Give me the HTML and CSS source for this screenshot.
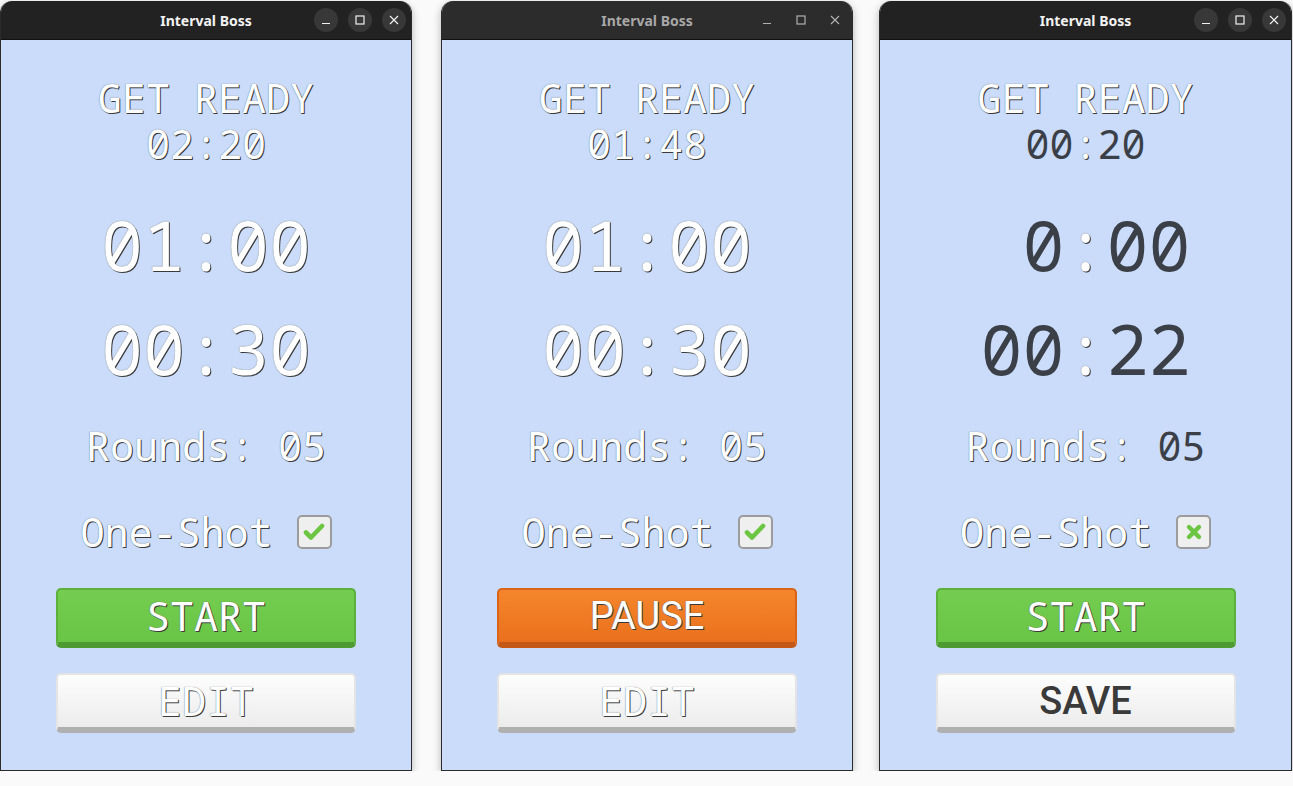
FILE: index.html
```html
<!DOCTYPE html>
<html lang="en">
<head>
  <meta charset="UTF-8">
  <title>Interval Boss</title>
  <link rel="stylesheet" href="styles.css">
</head>
<body>
  <div class="desk">

    <!-- window 1: idle -->
    <div class="win">
      <div class="titlebar">
        <span class="title">Interval Boss</span>
        <div class="wm-buttons">
          <span class="wm-btn"><svg width="10" height="10" viewBox="0 0 10 10"><path d="M1 8.5h8" stroke="currentColor" stroke-width="1.2"/></svg></span>
          <span class="wm-btn"><svg width="10" height="10" viewBox="0 0 10 10"><rect x="1" y="1" width="8" height="8" fill="none" stroke="currentColor" stroke-width="1.2"/></svg></span>
          <span class="wm-btn"><svg width="10" height="10" viewBox="0 0 10 10"><path d="M1 1l8 8M9 1l-8 8" stroke="currentColor" stroke-width="1.2"/></svg></span>
        </div>
      </div>
      <div class="app">
        <div class="status">
          <div class="line">GET READY</div>
          <div class="line">02:20</div>
        </div>
        <div class="big">01:00</div>
        <div class="big second">00:30</div>
        <div class="rounds">Rounds: 05</div>
        <div class="oneshot">
          <span>One-Shot</span>
          <span class="checkbox"><svg width="22" height="20" viewBox="0 0 22 20"><path d="M3 10.5l5 5L19 4" fill="none" stroke="#6cc644" stroke-width="4.6" stroke-linecap="round" stroke-linejoin="round"/></svg></span>
        </div>
        <button class="btn btn-go">START</button>
        <button class="btn btn-plain">EDIT</button>
      </div>
    </div>

    <!-- window 2: running, unfocused -->
    <div class="win win-2 inactive">
      <div class="titlebar">
        <span class="title">Interval Boss</span>
        <div class="wm-buttons">
          <span class="wm-btn"><svg width="10" height="10" viewBox="0 0 10 10"><path d="M1 8.5h8" stroke="currentColor" stroke-width="1.2"/></svg></span>
          <span class="wm-btn"><svg width="10" height="10" viewBox="0 0 10 10"><rect x="1" y="1" width="8" height="8" fill="none" stroke="currentColor" stroke-width="1.2"/></svg></span>
          <span class="wm-btn"><svg width="10" height="10" viewBox="0 0 10 10"><path d="M1 1l8 8M9 1l-8 8" stroke="currentColor" stroke-width="1.2"/></svg></span>
        </div>
      </div>
      <div class="app">
        <div class="status">
          <div class="line">GET READY</div>
          <div class="line">01:48</div>
        </div>
        <div class="big">01:00</div>
        <div class="big second">00:30</div>
        <div class="rounds">Rounds: 05</div>
        <div class="oneshot">
          <span>One-Shot</span>
          <span class="checkbox"><svg width="22" height="20" viewBox="0 0 22 20"><path d="M3 10.5l5 5L19 4" fill="none" stroke="#6cc644" stroke-width="4.6" stroke-linecap="round" stroke-linejoin="round"/></svg></span>
        </div>
        <button class="btn btn-pause">PAUSE</button>
        <button class="btn btn-plain">EDIT</button>
      </div>
    </div>

    <!-- window 3: editing -->
    <div class="win win-3">
      <div class="titlebar">
        <span class="title">Interval Boss</span>
        <div class="wm-buttons">
          <span class="wm-btn"><svg width="10" height="10" viewBox="0 0 10 10"><path d="M1 8.5h8" stroke="currentColor" stroke-width="1.2"/></svg></span>
          <span class="wm-btn"><svg width="10" height="10" viewBox="0 0 10 10"><rect x="1" y="1" width="8" height="8" fill="none" stroke="currentColor" stroke-width="1.2"/></svg></span>
          <span class="wm-btn"><svg width="10" height="10" viewBox="0 0 10 10"><path d="M1 1l8 8M9 1l-8 8" stroke="currentColor" stroke-width="1.2"/></svg></span>
        </div>
      </div>
      <div class="app">
        <div class="status">
          <div class="line">GET READY</div>
          <div class="line"><span class="edit">00</span>:<span class="edit">20</span></div>
        </div>
        <div class="big"><span class="edit"> 0</span>:<span class="edit">00</span></div>
        <div class="big second"><span class="edit">00</span>:<span class="edit">22</span></div>
        <div class="rounds">Rounds: <span class="edit">05</span></div>
        <div class="oneshot">
          <span>One-Shot</span>
          <span class="checkbox"><svg width="18" height="18" viewBox="0 0 18 18"><path d="M4 4l10 10M14 4L4 14" fill="none" stroke="#6cc644" stroke-width="4.4" stroke-linecap="round"/></svg></span>
        </div>
        <button class="btn btn-go">START</button>
        <button class="btn btn-plain btn-save">SAVE</button>
      </div>
    </div>

  </div>
</body>
</html>
```

FILE: styles.css
```css
body {
  margin: 0;
  padding: 0;
  background-color: #fafafa;
  font-family: "Noto Sans Mono", "DejaVu Sans Mono", monospace;
}

.desk {
  display: flex;
  align-items: flex-start;
  padding-top: 1px;
}

.win {
  width: 412px;
  height: 770px;
  box-sizing: border-box;
  display: flex;
  flex-direction: column;
  border-radius: 12px 12px 0 0;
  border: 1px solid #2b2b2b;
  border-top: none;
  overflow: hidden;
  box-shadow: 0 3px 9px rgba(0, 0, 0, 0.28);
}

.win-2 {
  margin-left: 29px;
}

.win-3 {
  width: 413px;
  margin-left: 26px;
}

/* title bar */
.titlebar {
  height: 38px;
  flex-shrink: 0;
  display: grid;
  grid-template-columns: 1fr auto 1fr;
  align-items: center;
  background-color: #222;
  border-bottom: 1px solid #111;
  font-family: "Noto Sans", "Open Sans", sans-serif;
}

.title {
  grid-column: 2;
  font-size: 14px;
  font-weight: bold;
  color: #f2f2f2;
}

.wm-buttons {
  grid-column: 3;
  justify-self: end;
  display: flex;
  gap: 10px;
  padding-right: 5px;
}

.wm-btn {
  width: 24px;
  height: 24px;
  border-radius: 50%;
  background-color: #383838;
  color: #f0f0f0;
  display: flex;
  align-items: center;
  justify-content: center;
}

.inactive .titlebar {
  background-color: #2c2c2c;
}

.inactive .title {
  color: #a8a8a8;
}

.inactive .wm-btn {
  background-color: transparent;
  color: #b0b0b0;
}

/* app body */
.app {
  flex: 1;
  background-color: #cadcf9;
  display: flex;
  flex-direction: column;
  align-items: center;
  color: #fff;
  text-shadow: 1px 1px 0 #3a3a3a, 0 0 1px #555;
  font-variant-numeric: slashed-zero;
}

.status {
  margin-top: 35px;
  text-align: center;
  font-size: 40px;
  line-height: 46px;
}

.line,
.big,
.rounds {
  white-space: pre;
}

.big {
  font-size: 70px;
  line-height: 82px;
  margin-top: 36px;
}

.big.second {
  margin-top: 22px;
}

.rounds {
  margin-top: 34px;
  font-size: 40px;
  line-height: 46px;
}

.oneshot {
  margin-top: 40px;
  display: flex;
  align-items: center;
  gap: 24px;
  font-size: 40px;
  line-height: 46px;
}

.checkbox {
  width: 35px;
  height: 34px;
  box-sizing: border-box;
  border: 2px solid #9c9c9c;
  border-radius: 5px;
  background-color: #efefef;
  display: flex;
  align-items: center;
  justify-content: center;
}

.edit {
  color: #3b3f47;
  text-shadow: none;
}

/* buttons */
.btn {
  width: 300px;
  height: 60px;
  box-sizing: border-box;
  margin-top: 33px;
  padding: 0;
  border-radius: 5px;
  font-family: inherit;
  font-size: 40px;
  line-height: 46px;
  color: #fff;
  text-shadow: 1px 1px 0 #3a3a3a, 0 0 1px #555;
  cursor: pointer;
}

.btn + .btn {
  margin-top: 25px;
}

.btn-go {
  background: linear-gradient(#74cd50, #69c545);
  border: 2px solid #5cb13c;
  border-bottom: 6px solid #4e9a32;
}

.btn-pause {
  background: linear-gradient(#f5862c, #ea701d);
  border: 2px solid #d9651b;
  border-bottom: 6px solid #c45817;
  font-family: Roboto, sans-serif;
  font-size: 38px;
}

.btn-plain {
  background: linear-gradient(#fdfdfd, #ececec);
  border: 2px solid #e4e4e4;
  border-bottom: 6px solid #b0b0b0;
}

.btn-save {
  font-family: Roboto, sans-serif;
  font-weight: 500;
  font-size: 38px;
  color: #3a3a3a;
  text-shadow: none;
}
```
